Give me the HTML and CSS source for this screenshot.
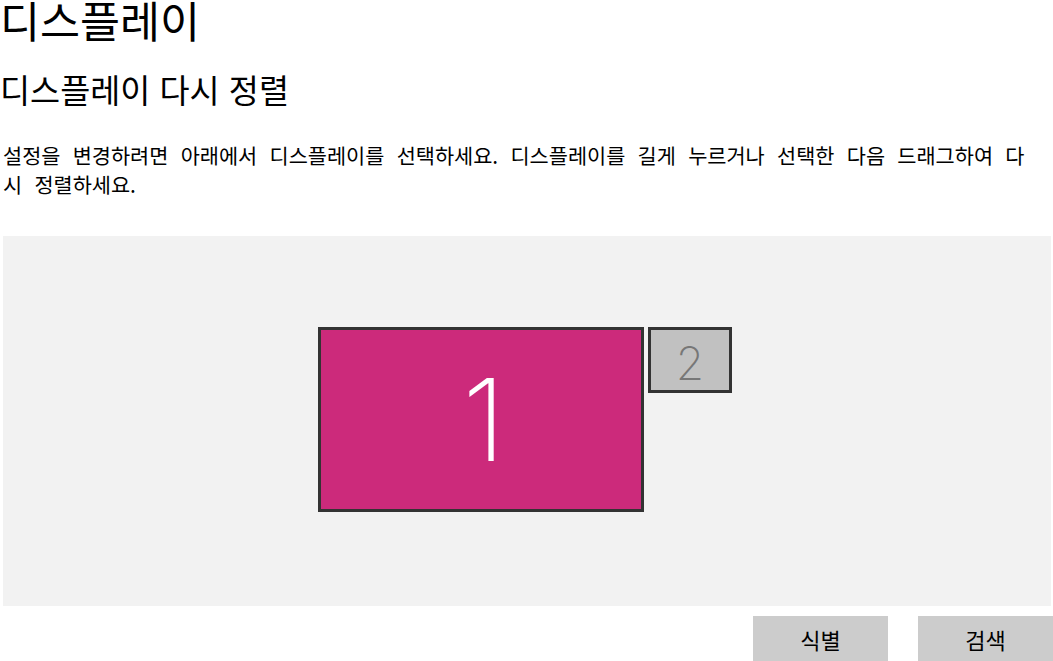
FILE: index.html
```html
<!DOCTYPE html>
<html lang="ko">
<head>
<meta charset="utf-8">
<link rel="stylesheet" href="styles.css">
</head>
<body>
<div class="page">
  <h1 class="title">디스플레이</h1>
  <h2 class="subtitle">디스플레이 다시 정렬</h2>
  <p class="desc">설정을 변경하려면 아래에서 디스플레이를 선택하세요. 디스플레이를 길게 누르거나 선택한 다음 드래그하여 다시 정렬하세요.</p>
  <div class="canvas">
    <div class="monitor monitor-1"><span class="num num-1">1</span></div>
    <div class="monitor monitor-2"><span class="num num-2">2</span></div>
  </div>
  <div class="actions">
    <button class="btn">식별</button>
    <button class="btn">검색</button>
  </div>
</div>
</body>
</html>
```
FILE: styles.css
```css
html, body {
  margin: 0;
  padding: 0;
  background: #ffffff;
  overflow: hidden;
}
body {
  font-family: "Noto Sans CJK KR", "Noto Sans", sans-serif;
  color: #000;
}
.page {
  padding: 0 0 0 3px;
}
.title {
  margin: 0 0 0 -3px;
  font-size: 43.5px;
  font-weight: 400;
  line-height: 40px;
}
.subtitle {
  margin: 29px 0 0 -3px;
  font-size: 32.7px;
  font-weight: 400;
  line-height: 40px;
}
.desc {
  margin: 32px 0 0 0;
  font-size: 20.8px;
  line-height: 29px;
  word-spacing: 6.5px;
  max-width: 1035px;
}
.canvas {
  position: relative;
  margin: 37px 2px 0 0;
  height: 370px;
  background: #f2f2f2;
}
.monitor {
  position: absolute;
  box-sizing: border-box;
  border: 3px solid #333333;
  display: flex;
  align-items: center;
  justify-content: center;
}
.monitor-1 {
  left: 315px;
  top: 91px;
  width: 326px;
  height: 185px;
  background: #cc2a7b;
}
.monitor-2 {
  left: 645px;
  top: 91px;
  width: 84px;
  height: 66px;
  background: #c1c1c1;
}
.num {
  font-family: "Inter", "Noto Sans", sans-serif;
  font-weight: 200;
  line-height: 1;
}
.num-1 {
  color: #ffffff;
  font-size: 114px;
  margin-left: 6px;
}
.num-2 {
  color: #777777;
  font-size: 46px;
  margin-top: 6px;
}
.actions {
  display: flex;
  justify-content: flex-end;
  gap: 30px;
  margin-top: 10px;
}
.btn {
  width: 135px;
  height: 45px;
  border: none;
  background: #cccccc;
  font-family: "Noto Sans CJK KR", sans-serif;
  font-size: 22px;
  color: #000;
  padding: 0;
}
```
